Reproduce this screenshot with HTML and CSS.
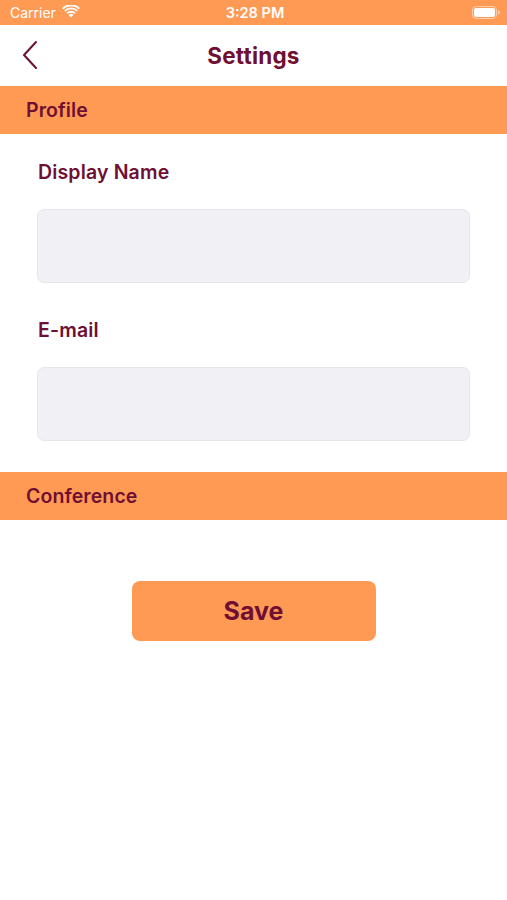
FILE: index.html
```html
<!DOCTYPE html>
<html lang="en">
<head>
<meta charset="utf-8">
<title>Settings</title>
<link rel="stylesheet" href="styles.css">
</head>
<body>
<div class="screen">
  <div class="status-bar">
    <div class="status-left">
      <span class="carrier">Carrier</span>
      <svg class="wifi" width="18" height="13" viewBox="0 0 18 13">
        <path d="M9 12.5 L6.6 9.9 A3.4 3.4 0 0 1 11.4 9.9 Z" fill="#fff"/>
        <path d="M4.4 7.6 A6.6 6.6 0 0 1 13.6 7.6 L12.3 9 A4.7 4.7 0 0 0 5.7 9 Z" fill="#fff"/>
        <path d="M2.1 5.2 A9.9 9.9 0 0 1 15.9 5.2 L14.6 6.6 A8 8 0 0 0 3.4 6.6 Z" fill="#fff"/>
        <path d="M0 2.9 A13 13 0 0 1 18 2.9 L16.7 4.3 A11.1 11.1 0 0 0 1.3 4.3 Z" fill="#fff"/>
      </svg>
    </div>
    <span class="time">3:28 PM</span>
    <div class="status-right">
      <svg class="battery" width="28" height="13" viewBox="0 0 28 13">
        <rect x="0.5" y="0.5" width="24" height="12" rx="3.5" fill="none" stroke="rgba(255,255,255,0.5)"/>
        <rect x="2" y="2" width="21" height="9" rx="2" fill="#fff"/>
        <path d="M26 4.5 A2 2 0 0 1 26 8.5 Z" fill="rgba(255,255,255,0.5)"/>
      </svg>
    </div>
  </div>

  <header class="nav-bar">
    <button class="back" aria-label="Back">
      <svg width="18" height="30" viewBox="0 0 18 30">
        <path d="M15 2 L3 15 L15 28" fill="none" stroke="#6e0f33" stroke-width="2" stroke-linecap="round" stroke-linejoin="round"/>
      </svg>
    </button>
    <h1 class="nav-title">Settings</h1>
  </header>

  <section class="section">
    <h2 class="section-header">Profile</h2>
    <div class="form">
      <label class="field">
        <span class="field-label">Display Name</span>
        <input class="field-input" type="text">
      </label>
      <label class="field">
        <span class="field-label">E-mail</span>
        <input class="field-input" type="email">
      </label>
    </div>
  </section>

  <section class="section">
    <h2 class="section-header">Conference</h2>
  </section>

  <div class="actions">
    <button class="save">Save</button>
  </div>
</div>
</body>
</html>
```

FILE: styles.css
```css
* {
  box-sizing: border-box;
}

html, body {
  margin: 0;
  padding: 0;
  background: #fff;
}

body {
  font-family: Inter, "Noto Sans", "Liberation Sans", sans-serif;
  color: #6e0f33;
}

.screen {
  width: 507px;
  min-height: 900px;
  display: flex;
  flex-direction: column;
}

/* status bar */
.status-bar {
  height: 25px;
  background: #ff9a55;
  display: grid;
  grid-template-columns: 1fr auto 1fr;
  align-items: center;
  padding: 0 7px 0 10px;
  color: #fff;
}

.status-left {
  display: flex;
  align-items: center;
  gap: 6px;
}

.carrier {
  font-size: 14px;
  font-weight: 400;
}

.wifi {
  margin-top: -2px;
}

.time {
  font-size: 14.5px;
  font-weight: 600;
}

.status-right {
  display: flex;
  justify-content: flex-end;
}

/* navigation bar */
.nav-bar {
  height: 61px;
  position: relative;
  display: flex;
  align-items: center;
  justify-content: center;
}

.back {
  position: absolute;
  left: 21px;
  top: 15px;
  padding: 0;
  border: 0;
  background: none;
  display: flex;
}

.nav-title {
  margin: 0;
  font-size: 22.5px;
  font-weight: 700;
  letter-spacing: 0.2px;
}

/* section headers */
.section-header {
  margin: 0;
  height: 48px;
  background: #ff9a55;
  display: flex;
  align-items: center;
  padding-left: 26px;
  font-size: 19.5px;
  font-weight: 600;
  letter-spacing: 0.1px;
}

/* form */
.form {
  padding: 26px 37px 31px;
  display: flex;
  flex-direction: column;
  gap: 35px;
}

.field {
  display: flex;
  flex-direction: column;
  gap: 25px;
}

.field-label {
  padding-left: 1px;
  font-size: 19.5px;
  font-weight: 600;
  line-height: 24px;
  letter-spacing: 0.15px;
}

.field-input {
  height: 74px;
  width: 100%;
  background: #f0f0f5;
  border: 1px solid #e6e6eb;
  border-radius: 7px;
  font: inherit;
  padding: 0 12px;
  outline: none;
}

/* actions */
.actions {
  display: flex;
  justify-content: center;
  padding-top: 61px;
}

.save {
  width: 244px;
  height: 60px;
  border: 0;
  border-radius: 8px;
  background: #ff9a55;
  color: #6e0f33;
  font-family: inherit;
  font-size: 25px;
  font-weight: 700;
}
```
